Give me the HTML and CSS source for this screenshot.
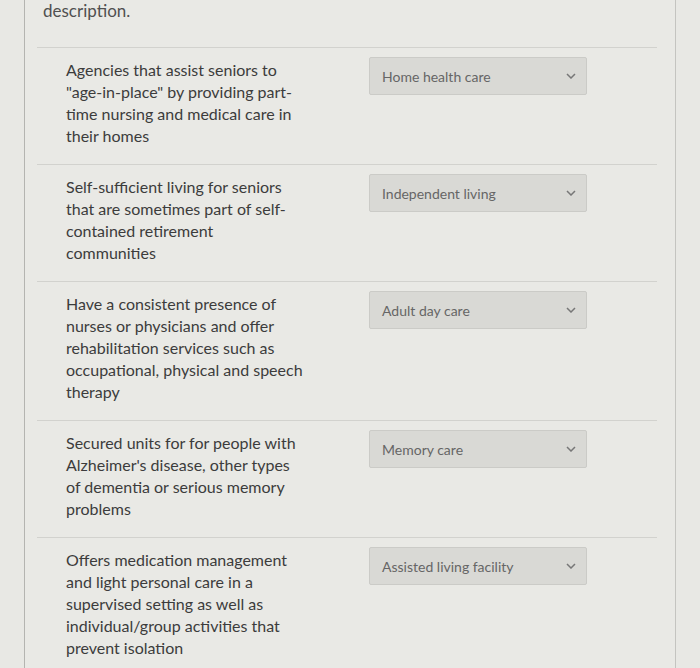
FILE: index.html
```html
<!DOCTYPE html>
<html>
<head>
<meta charset="utf-8">
<link rel="stylesheet" href="styles.css">
</head>
<body>
<div class="panel">
  <div class="heading">description.</div>
  <div class="row">
    <div class="desc">Agencies that assist seniors to "age-in-place" by providing part-time nursing and medical care in their homes</div>
    <div class="select"><span>Home health care</span><svg class="chev" viewBox="0 0 10 6" width="10" height="6"><path d="M1 1 L5 5 L9 1" fill="none" stroke="#777" stroke-width="1.5"/></svg></div>
  </div>
  <div class="row">
    <div class="desc">Self-sufficient living for seniors that are sometimes part of self-contained retirement communities</div>
    <div class="select"><span>Independent living</span><svg class="chev" viewBox="0 0 10 6" width="10" height="6"><path d="M1 1 L5 5 L9 1" fill="none" stroke="#777" stroke-width="1.5"/></svg></div>
  </div>
  <div class="row">
    <div class="desc">Have a consistent presence of nurses or physicians and offer rehabilitation services such as occupational, physical and speech therapy</div>
    <div class="select"><span>Adult day care</span><svg class="chev" viewBox="0 0 10 6" width="10" height="6"><path d="M1 1 L5 5 L9 1" fill="none" stroke="#777" stroke-width="1.5"/></svg></div>
  </div>
  <div class="row">
    <div class="desc">Secured units for for people with Alzheimer's disease, other types of dementia or serious memory problems</div>
    <div class="select"><span>Memory care</span><svg class="chev" viewBox="0 0 10 6" width="10" height="6"><path d="M1 1 L5 5 L9 1" fill="none" stroke="#777" stroke-width="1.5"/></svg></div>
  </div>
  <div class="row">
    <div class="desc">Offers medication management and light personal care in a supervised setting as well as individual/group activities that prevent isolation</div>
    <div class="select"><span>Assisted living facility</span><svg class="chev" viewBox="0 0 10 6" width="10" height="6"><path d="M1 1 L5 5 L9 1" fill="none" stroke="#777" stroke-width="1.5"/></svg></div>
  </div>
</div>
</body>
</html>
```
FILE: styles.css
```css
html, body {
  margin: 0;
  padding: 0;
  background: #e8e8e4;
  font-family: Lato, "Liberation Sans", sans-serif;
  overflow: hidden;
}
.panel {
  margin-left: 24px;
  width: 620px;
  height: 668px;
  border-left: 1px solid #b4b4b0;
  border-right: 1px solid #c4c4c0;
  padding: 0 18px 0 12px;
  background: #e9e9e5;
}
.heading {
  padding: 2px 0 0 6px;
  height: 45px;
  font-size: 17px;
  line-height: 17px;
  color: #505050;
}
.row {
  display: grid;
  grid-template-columns: 332px 218px;
  border-top: 1px solid #d2d2ce;
  padding: 11px 0 17px;
}
.desc {
  padding-left: 29px;
  width: 240px;
  font-size: 16px;
  line-height: 22px;
  color: #3c3c3c;
}
.select {
  margin-top: -2px;
  height: 38px;
  box-sizing: border-box;
  background: #d9d9d5;
  border: 1px solid #cbcbc7;
  border-radius: 2px;
  display: flex;
  align-items: center;
  justify-content: space-between;
  padding: 0 10px 0 12px;
  font-size: 14px;
  color: #666;
}
.chev {
  display: block;
}
```
